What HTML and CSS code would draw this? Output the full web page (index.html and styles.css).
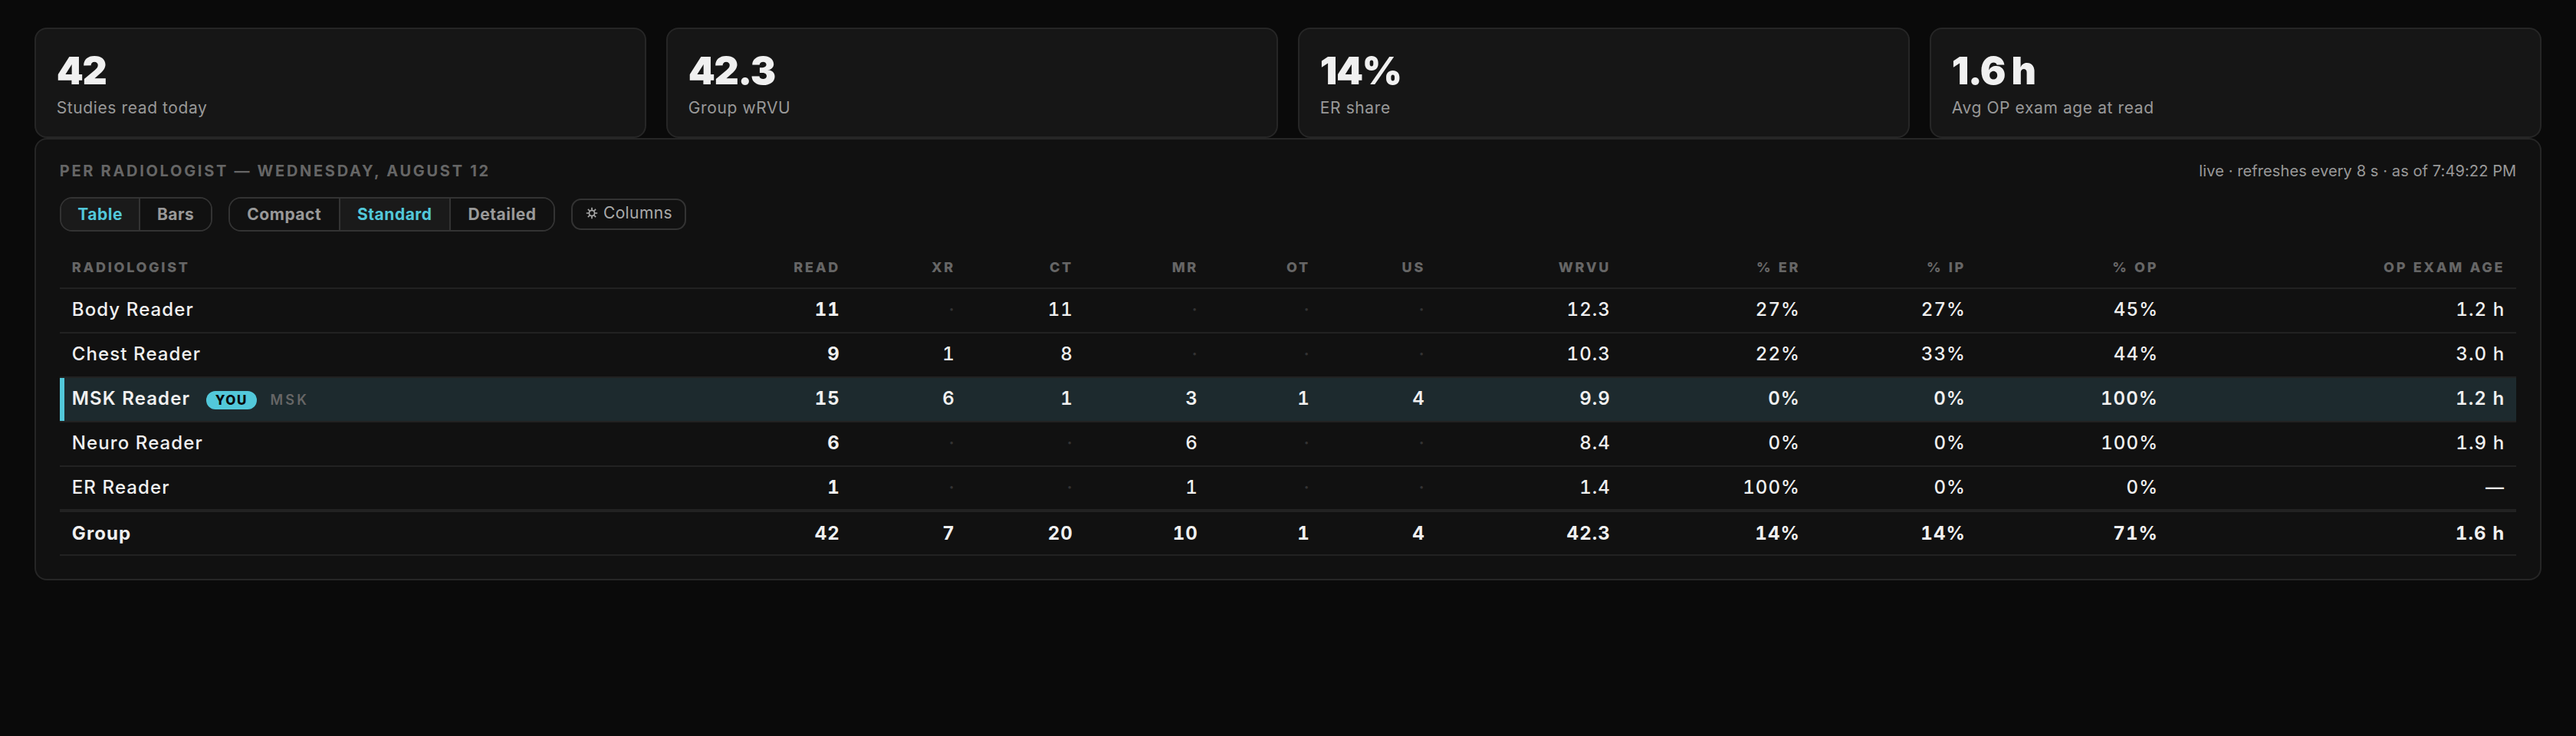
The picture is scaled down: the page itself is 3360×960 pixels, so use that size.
FILE: index.html
```html
<!DOCTYPE html>
<html>
<head>
  <meta charset="utf-8" />
  <title>Per radiologist</title>
  <link rel="stylesheet" href="styles.css">
</head>
<body>
  <div class="kpis">
    <div class="kpi"><div class="kpi-value">42</div><div class="kpi-label">Studies read today</div></div>
    <div class="kpi"><div class="kpi-value">42.3</div><div class="kpi-label">Group wRVU</div></div>
    <div class="kpi"><div class="kpi-value">14%</div><div class="kpi-label">ER share</div></div>
    <div class="kpi"><div class="kpi-value">1.6 h</div><div class="kpi-label">Avg OP exam age at read</div></div>
  </div>

  <div class="panel">
    <div class="panel-head">
      <span class="panel-title">PER RADIOLOGIST — WEDNESDAY, AUGUST 12</span>
      <span class="panel-status">live · refreshes every 8 s · as of 7:49:22 PM</span>
    </div>

    <div class="toolbar">
      <div class="segment segment-view">
        <a class="seg-btn active">Table</a>
        <a class="seg-btn">Bars</a>
      </div>
      <div class="segment">
        <a class="seg-btn">Compact</a>
        <a class="seg-btn active">Standard</a>
        <a class="seg-btn">Detailed</a>
      </div>
      <a class="columns-btn">
        <svg class="gear" viewBox="0 0 16 16" fill="none" stroke="currentColor">
          <circle cx="8" cy="8" r="3.6" stroke-width="1.8"/>
          <path stroke-width="1.7" d="M8 .8v3M8 12.2v3M.8 8h3M12.2 8h3M2.9 2.9 5 5M11 11l2.1 2.1M2.9 13.1 5 11M11 5l2.1-2.1"/>
        </svg>
        Columns
      </a>
    </div>

    <table class="readers">
      <colgroup>
        <col class="c-name"><col class="c-read"><col class="c-xr"><col class="c-ct"><col class="c-mr"><col class="c-ot"><col class="c-us"><col class="c-wrvu"><col class="c-er"><col class="c-ip"><col class="c-op"><col class="c-age">
      </colgroup>
      <thead>
        <tr>
          <th>RADIOLOGIST</th><th>READ</th><th>XR</th><th>CT</th><th>MR</th><th>OT</th><th>US</th><th>WRVU</th><th>% ER</th><th>% IP</th><th>% OP</th><th>OP EXAM AGE</th>
        </tr>
      </thead>
      <tbody>
        <tr>
          <td>Body Reader</td><td class="read">11</td><td class="nil">·</td><td>11</td><td class="nil">·</td><td class="nil">·</td><td class="nil">·</td><td>12.3</td><td>27%</td><td>27%</td><td>45%</td><td>1.2 h</td>
        </tr>
        <tr>
          <td>Chest Reader</td><td class="read">9</td><td>1</td><td>8</td><td class="nil">·</td><td class="nil">·</td><td class="nil">·</td><td>10.3</td><td>22%</td><td>33%</td><td>44%</td><td>3.0 h</td>
        </tr>
        <tr class="me">
          <td>MSK Reader <span class="you">YOU</span> <span class="subspec">MSK</span></td><td class="read">15</td><td>6</td><td>1</td><td>3</td><td>1</td><td>4</td><td>9.9</td><td>0%</td><td>0%</td><td>100%</td><td>1.2 h</td>
        </tr>
        <tr>
          <td>Neuro Reader</td><td class="read">6</td><td class="nil">·</td><td class="nil">·</td><td>6</td><td class="nil">·</td><td class="nil">·</td><td>8.4</td><td>0%</td><td>0%</td><td>100%</td><td>1.9 h</td>
        </tr>
        <tr>
          <td>ER Reader</td><td class="read">1</td><td class="nil">·</td><td class="nil">·</td><td>1</td><td class="nil">·</td><td class="nil">·</td><td>1.4</td><td>100%</td><td>0%</td><td>0%</td><td>—</td>
        </tr>
      </tbody>
      <tfoot>
        <tr>
          <td>Group</td><td>42</td><td>7</td><td>20</td><td>10</td><td>1</td><td>4</td><td>42.3</td><td>14%</td><td>14%</td><td>71%</td><td>1.6 h</td>
        </tr>
      </tfoot>
    </table>
  </div>
</body>
</html>
```

FILE: styles.css
```css
html, body {
  margin: 0;
  padding: 0;
}

body {
  background: #0a0a0a;
  color: #f0f0f0;
  font-family: Inter, "Liberation Sans", sans-serif;
  padding: 36px 44.8px 0;
}

.kpis {
  display: grid;
  grid-template-columns: repeat(4, 1fr);
  gap: 25.6px;
}

.kpi {
  background: #161616;
  border: 2px solid #262626;
  border-radius: 16px;
  height: 144px;
  box-sizing: border-box;
  padding: 27px 27px 0;
}

.kpi-value {
  font-size: 50px;
  line-height: 54px;
  font-weight: 900;
  letter-spacing: -1.4px;
  color: #f0f0f0;
}

.kpi-label {
  margin-top: 7px;
  font-size: 21px;
  line-height: 30px;
  color: #999;
  letter-spacing: 0.6px;
}

.panel {
  background: #111;
  border: 2px solid #262626;
  border-radius: 16px;
  padding: 28px 31px 30px;
}

.panel-head {
  display: flex;
  justify-content: space-between;
  align-items: center;
  height: 26px;
}

.panel-title {
  font-size: 20px;
  font-weight: 700;
  letter-spacing: 2.7px;
  color: #666;
}

.panel-status {
  font-size: 20px;
  letter-spacing: 0.1px;
  color: #999;
}

.toolbar {
  display: flex;
  align-items: center;
  gap: 21px;
  margin-top: 21px;
  margin-bottom: 20px;
}

.segment {
  display: flex;
  height: 45px;
  box-sizing: border-box;
  border: 2px solid #333;
  border-radius: 16px;
  overflow: hidden;
}

.seg-btn {
  display: flex;
  align-items: center;
  padding: 0 22.5px;
  font-size: 21px;
  font-weight: 700;
  letter-spacing: 0.5px;
  color: #999;
  background: #111;
}

.segment-view .seg-btn {
  padding: 0 21.5px;
}

.seg-btn + .seg-btn {
  border-left: 2px solid #333;
}

.seg-btn.active {
  background: #1a1a1a;
  color: #52c8da;
}

.columns-btn {
  display: flex;
  align-items: center;
  gap: 7px;
  height: 41px;
  box-sizing: border-box;
  padding: 0 16px 4px 17px;
  border: 2px solid #333;
  border-radius: 13px;
  font-size: 21px;
  letter-spacing: 0.4px;
  color: #aaa;
}

.gear {
  width: 16px;
  height: 16px;
}

.readers {
  width: 100%;
  table-layout: fixed;
  border-collapse: collapse;
  font-variant-numeric: tabular-nums;
}

.c-name { width: 840px; }
.c-read { width: 193px; }
.c-xr { width: 150px; }
.c-ct { width: 154px; }
.c-mr { width: 163px; }
.c-ot { width: 146px; }
.c-us { width: 150px; }
.c-wrvu { width: 242px; }
.c-er { width: 247px; }
.c-ip { width: 216px; }
.c-op { width: 251px; }
.c-age { width: 452px; }

.readers th,
.readers td {
  padding: 0 15px 0 16px;
  text-align: right;
  white-space: nowrap;
  border-bottom: 2px solid #222;
}

.readers th:first-child,
.readers td:first-child {
  text-align: left;
}

.readers th {
  height: 54px;
  box-sizing: border-box;
  font-size: 18px;
  font-weight: 800;
  letter-spacing: 2.7px;
  color: #666;
}

.readers td {
  height: 58px;
  box-sizing: border-box;
  padding-bottom: 3px;
  font-size: 24px;
  font-weight: 500;
  letter-spacing: 1.1px;
  color: #f0f0f0;
}

.readers td.read {
  font-weight: 700;
}

.readers td.nil {
  color: #333;
}

.me td {
  background: #1d2a2e;
  font-weight: 600;
}

.me td:first-child {
  box-shadow: inset 6px 0 0 #52c8da;
}

.you {
  display: inline-block;
  margin-left: 13px;
  padding: 0 12px;
  height: 24px;
  line-height: 24px;
  border-radius: 12px;
  background: #52c8da;
  color: #0a0a0a;
  font-size: 17px;
  font-weight: 800;
  letter-spacing: 1.6px;
}

.subspec {
  margin-left: 10px;
  font-size: 18px;
  font-weight: 600;
  letter-spacing: 3.2px;
  color: #666;
}

.readers tfoot td {
  padding-bottom: 0;
  font-weight: 700;
  border-top: 4px solid #222;
}
```
